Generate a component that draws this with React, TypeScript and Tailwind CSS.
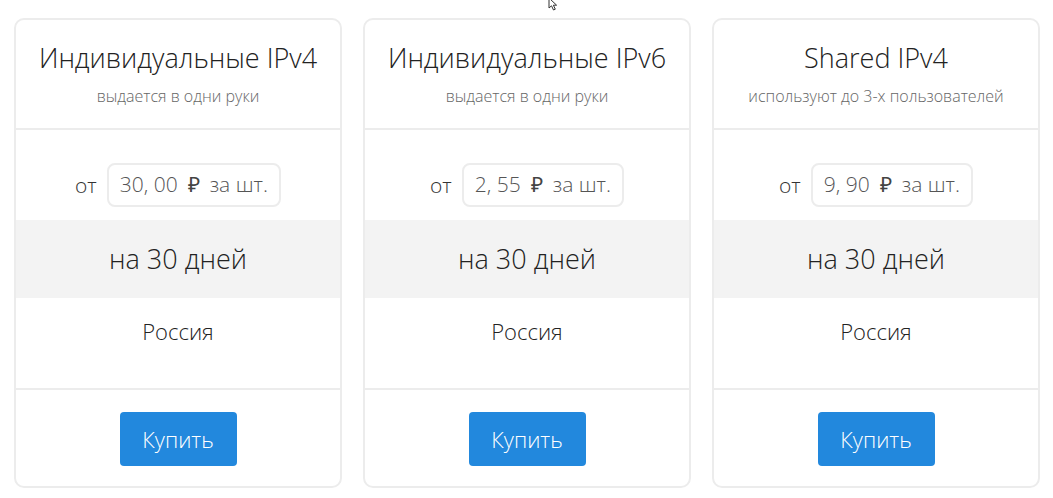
const plans = [
  { title: "Индивидуальные IPv4", sub: "выдается в одни руки", price: "30, 00" },
  { title: "Индивидуальные IPv6", sub: "выдается в одни руки", price: "2, 55" },
  { title: "Shared IPv4", sub: "используют до 3-х пользователей", price: "9, 90" },
];

function Card({ p }: { p: (typeof plans)[number] }) {
  return (
    <div className="w-[328px] h-[470px] border-2 border-[#ececec] rounded-[10px] bg-white flex flex-col overflow-hidden">
      <div className="flex flex-col items-center pt-[20px] h-[110px] border-b-2 border-[#ececec]">
        <h3 className="text-[27px] leading-[36px] text-[#222]">{p.title}</h3>
        <p className="mt-[9px] text-[16px] leading-[22px] text-[#666]">{p.sub}</p>
      </div>
      <div className="h-[90px] flex items-start justify-center pt-[33px] gap-[10px]">
        <span className="text-[21px] leading-[44px] text-[#333]">от</span>
        <span className="h-[44px] px-[11px] flex items-center gap-[10px] border-2 border-[#ececec] rounded-[8px] text-[21px] text-[#555]">
          <span>{p.price}</span>
          <span className="font-medium text-[#444]">₽</span>
          <span>за шт.</span>
        </span>
      </div>
      <div className="h-[78px] bg-[#f3f3f3] flex items-center justify-center">
        <span className="text-[27px] text-[#222]">на 30 дней</span>
      </div>
      <div className="h-[92px] border-b-2 border-[#ececec] flex justify-center pt-[18px]">
        <span className="text-[22px] leading-[30px] text-[#222]">Россия</span>
      </div>
      <div className="flex-1 flex justify-center pt-[22px]">
        <button className="w-[117px] h-[54px] bg-[#2288dd] rounded-[4px] text-white text-[22px]">
          Купить
        </button>
      </div>
    </div>
  );
}

export default function App() {
  return (
    <div className="relative w-[1053px] h-[498px] bg-white font-['Open_Sans',sans-serif] font-light">
      <svg className="absolute left-[548px] top-[-3px]" width="14" height="14" viewBox="0 0 14 14">
        <path d="M1 1 L1 11 L3.5 8.8 L5.5 13 L7.3 12.2 L5.4 8.2 L8.6 8.2 Z" fill="white" stroke="#333" strokeWidth="1" />
      </svg>
      <div className="flex gap-[21px] pl-[14px] pt-[18px]">
        {plans.map((p) => (
          <Card key={p.title} p={p} />
        ))}
      </div>
    </div>
  );
}
